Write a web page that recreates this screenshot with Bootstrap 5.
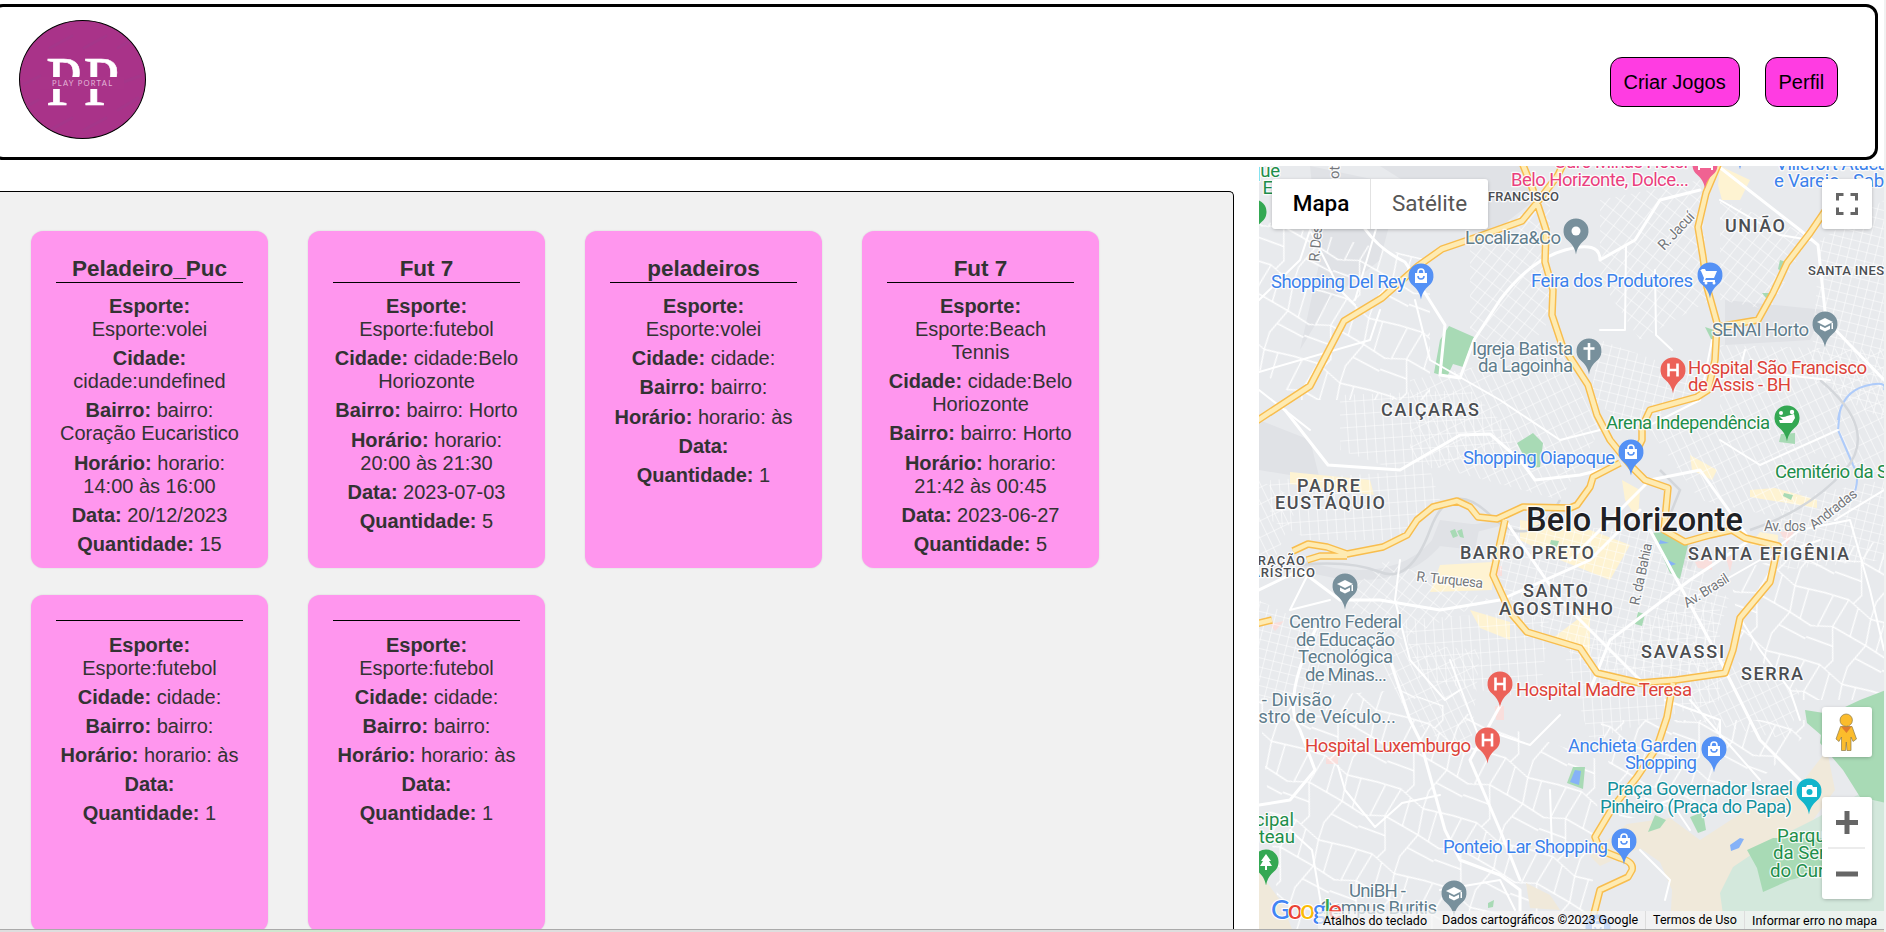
<!DOCTYPE html>
<html lang="pt-BR">
<head>
<meta charset="utf-8">
<meta name="viewport" content="width=device-width, initial-scale=1">
<title>Play Portal</title>
<link href="https://cdn.jsdelivr.net/npm/bootstrap@5.3.0/dist/css/bootstrap.min.css" rel="stylesheet">
<style>
  body { font-family: "Liberation Sans", Arial, sans-serif; font-size: 20px; line-height: 23px; color: #333; background: #fff; }
  .page { height: 932px; border-right: 2px solid #f1f1f1; }
  .topbar { height: 156px; margin: 4px 6px 0 -9px; padding: 0 38px 0 25px; border: 3px solid #000; border-radius: 12px; }
  .logo { width: 127px; height: 119px; margin-bottom: 5px; border: 1px solid #000; border-radius: 50%; background: #a93489; }
  .btn-pp { --bs-btn-font-size: 20px; --bs-btn-line-height: 23px; --bs-btn-color: #000; --bs-btn-bg: #ff3ce2; --bs-btn-border-color: #000;
            --bs-btn-padding-x: 12.9px; --bs-btn-padding-y: 12.5px; --bs-btn-border-radius: 12px; --bs-btn-hover-bg: #f02bd3; }
  .nav-gap { gap: 25px; margin-right: -1px; }
  .content-row { height: 769px; padding-top: 6px; }
  .games { width: 1235px; height: 738px; margin: 25px 0 0 -1px; padding: 39px 0 0 31px; background: #f1f1f1;
           border: 1px solid #000; border-bottom: 0; border-top-right-radius: 5px; }
  .games-grid { display: grid; grid-template-columns: repeat(4, 237px); grid-auto-rows: 337px; gap: 27px 40px; }
  .game { padding: 25px; border: 0; border-radius: 12px; background: #ff96ee; text-align: center; color: #333; box-shadow: 0 0 2px rgba(0,0,0,.12); }
  .game h3 { margin: 0 0 12px; padding-bottom: 1px; border-bottom: 1px solid #000; font-size: 22.5px; font-weight: 700; line-height: 25px; }
  .game h3:empty { margin-bottom: 12.5px; padding: 0; line-height: 0; }
  .game p { margin: 0 0 6.2px; }
  .map { width: 625px; height: 763px; margin-left: 25px; font-family: Roboto, sans-serif; background: #e8eaed; }
  .map-svg { width: 625px; height: 763px; }
  .ctl { position: absolute; background: #fff; border-radius: 3px; box-shadow: 0 1px 4px -1px rgba(0,0,0,.35); }
  .ctl-type { left: 13px; top: 13px; height: 50px; font-size: 22.5px; color: #565656; }
  .ctl-type b { width: 99px; font-weight: 500; color: #000; border-right: 1px solid #e2e2e2; padding-bottom: 2px; }
  .ctl-type span { width: 117px; padding-bottom: 2px; }
  .ctl-sq { right: 12px; width: 50px; height: 50px; }
  .ctl-full { top: 13px; }
  .ctl-man { top: 541px; }
  .ctl-zoom { top: 631px; height: 102px; }
  .terms { position: absolute; right: 0; bottom: 0; height: 18px; font-size: 12.5px; line-height: 18px; color: #000; }
  .terms span { background: rgba(245,245,245,.72); text-align: center; white-space: nowrap; }
  .tm1 { width: 117px; padding: 1px 3px 0 0; } .tm2 { width: 210px; } .tm3 { width: 99px; border-left: 1px solid #ddd; } .tm4 { width: 140px; border-left: 1px solid #ddd; padding-top: 1px; }
  .bottom-edge { height: 3px; border-top: 1px solid #aaa; background: linear-gradient(90deg, #dedede 0 5%, #cfe6cf 12% 18%, #dedede 28% 70%, #e8ddc8 90%); }

  .poi text, .hood text, .street text { paint-order: stroke; stroke: #fff; stroke-width: 2.6px; stroke-linejoin: round; stroke-opacity: .85; }
  .poi { font-size: 18.6px; }
  .hood { font-size: 18px; font-weight: 500; fill: #4b4e52; }
  .hood .sm { font-size: 13px; }
  .street { font-size: 14.5px; fill: #74777b; }
  .c-shop { fill: #3b82ec; } .c-gray { fill: #5f7d8c; } .c-red { fill: #dd4339; } .c-green { fill: #1e8e4a; } .c-pink { fill: #ea3f7e; } .c-teal { fill: #12909c; }
  .rd { fill: none; stroke: #fff; stroke-linejoin: round; stroke-linecap: round; }
  .park { fill: #a8dab5; }
</style>
</head>
<body>
<div class="page overflow-hidden">
  <header class="topbar d-flex align-items-center justify-content-between">
    <a href="#" class="logo d-block overflow-hidden">
      <svg width="125" height="117" viewBox="20 21 125 117" class="d-block">
        <g stroke="#a13a8a" stroke-width="3" stroke-linecap="round" opacity=".55"><path d="M50 48l22-12M84 48l22-12M118 48l20-12M50 130l22-12M84 130l22-12M118 110l20-12M24 84l16-8M24 108l14-8M118 84l22-8"/></g>
        <g font-family="Liberation Serif, serif" font-size="70" fill="#fff">
          <text x="46" y="105" textLength="36" lengthAdjust="spacingAndGlyphs" stroke="#fff" stroke-width=".6">P</text>
          <text x="83.500" y="105" textLength="36" lengthAdjust="spacingAndGlyphs" stroke="#fff" stroke-width=".6">P</text>
        </g>
        <path fill="#a93489" d="M40 77h84v12H40z"/>
        <text x="52" y="85.500" textLength="60" font-family="Lato, sans-serif" font-size="7.500" fill="#e3b4d8">PLAY PORTAL</text>
      </svg>
    </a>
    <nav class="nav-gap d-flex">
      <a href="#" class="btn btn-pp">Criar Jogos</a>
      <a href="#" class="btn btn-pp">Perfil</a>
    </nav>
  </header>

  <main class="content-row d-flex align-items-start">
    <section class="games flex-shrink-0 overflow-hidden">
      <div class="games-grid">
        <article class="game card d-block"><h3>Peladeiro_Puc</h3><p><strong>Esporte:</strong> Esporte:volei</p><p><strong>Cidade:</strong> cidade:undefined</p><p><strong>Bairro:</strong> bairro: Coração Eucaristico</p><p><strong>Horário:</strong> horario: 14:00 às 16:00</p><p><strong>Data:</strong> 20/12/2023</p><p><strong>Quantidade:</strong> 15</p></article>
        <article class="game card d-block"><h3>Fut 7</h3><p><strong>Esporte:</strong> Esporte:futebol</p><p><strong>Cidade:</strong> cidade:Belo Horiozonte</p><p><strong>Bairro:</strong> bairro: Horto</p><p><strong>Horário:</strong> horario: 20:00 às 21:30</p><p><strong>Data:</strong> 2023-07-03</p><p><strong>Quantidade:</strong> 5</p></article>
        <article class="game card d-block"><h3>peladeiros</h3><p><strong>Esporte:</strong> Esporte:volei</p><p><strong>Cidade:</strong> cidade:</p><p><strong>Bairro:</strong> bairro:</p><p><strong>Horário:</strong> horario: às</p><p><strong>Data:</strong></p><p><strong>Quantidade:</strong> 1</p></article>
        <article class="game card d-block"><h3>Fut 7</h3><p><strong>Esporte:</strong> Esporte:Beach Tennis</p><p><strong>Cidade:</strong> cidade:Belo Horiozonte</p><p><strong>Bairro:</strong> bairro: Horto</p><p><strong>Horário:</strong> horario: 21:42 às 00:45</p><p><strong>Data:</strong> 2023-06-27</p><p><strong>Quantidade:</strong> 5</p></article>
        <article class="game card d-block"><h3></h3><p><strong>Esporte:</strong> Esporte:futebol</p><p><strong>Cidade:</strong> cidade:</p><p><strong>Bairro:</strong> bairro:</p><p><strong>Horário:</strong> horario: às</p><p><strong>Data:</strong></p><p><strong>Quantidade:</strong> 1</p></article>
        <article class="game card d-block"><h3></h3><p><strong>Esporte:</strong> Esporte:futebol</p><p><strong>Cidade:</strong> cidade:</p><p><strong>Bairro:</strong> bairro:</p><p><strong>Horário:</strong> horario: às</p><p><strong>Data:</strong></p><p><strong>Quantidade:</strong> 1</p></article>
      </div>
    </section>

    <section class="map position-relative overflow-hidden flex-shrink-0">
      <svg class="map-svg d-block" viewBox="1259 166 625 763">
        <defs>
          <pattern id="gA" width="9" height="13" patternUnits="userSpaceOnUse" patternTransform="rotate(-4)"><path class="rd" stroke-width="1.100" d="M0 0H9M0 0V13"/></pattern>
          <pattern id="gB" width="10" height="12" patternUnits="userSpaceOnUse" patternTransform="rotate(38)"><path class="rd" stroke-width="1.100" d="M0 0H10M0 0V12"/></pattern>
          <pattern id="gC" width="9" height="9" patternUnits="userSpaceOnUse" patternTransform="rotate(14)"><path class="rd" stroke-width="1.100" d="M0 0H9M0 0V9"/></pattern>
          <pattern id="gD" width="8" height="15" patternUnits="userSpaceOnUse" patternTransform="rotate(-26)"><path class="rd" stroke-width="1.100" d="M0 0H8M0 0V15"/></pattern>
          <pattern id="gE" width="83" height="71" patternUnits="userSpaceOnUse" patternTransform="rotate(24)"><path class="rd" stroke-width="1.300" d="M0 12L24 9L52 18L83 12M24 9L20 40L34 71M34 0L30 10M52 18L58 44L83 48M0 48L20 40L58 44M58 44L50 71M50 0L52 18M66 16L70 46M8 11L6 46M36 13L40 42M0 60L28 58M54 60L83 62"/></pattern>
          <g id="p"><path d="M0 23.500C-1 17-4 13-7.500 10A12.500 12.500 0 1 1 7.500 10C4 13 1 17 0 23.500Z"/></g>
          <g id="bag" fill="#fff"><path d="M-6-3H6V7H-6z"/><path d="M-3-3V-4A3 3 0 0 1 3-4V-3" fill="none" stroke="#fff" stroke-width="1.600"/><path d="M-3 0A3 3 0 0 0 3 0" fill="none" stroke="#5491f5" stroke-width="1.500"/></g>
          <g id="hat" fill="#fff"><path d="M-8-2L0-6L8-2L0 2zM-5 1.500L0 4L5 1.500V5L0 7.500L-5 5zM6.500-1H8V5H6.500z"/></g>
          <g id="hh" fill="none" stroke="#fff" stroke-width="2.600"><path d="M-4.500-6.500V6.500M4.500-6.500V6.500M-4.500 0H4.500"/></g>
        </defs>

        <!-- ground -->
        <path fill="#e8eaed" d="M1259 166h625v763h-625z"/>
        <g fill="#e0e2e6"><path d="M1310 166L1400 185L1380 260L1330 300L1300 350L1320 260zM1259 420L1310 440L1320 480L1259 470zM1725 300L1825 310L1810 340L1725 345zM1440 520L1480 525L1475 550L1430 545zM1660 545H1700L1690 570zM1380 166L1520 166L1535 200L1490 235z"/><path d="M1300 560Q1400 590 1440 530L1500 520V526L1445 540Q1400 600 1300 570z"/></g>
        <g fill="#fef3d2"><path d="M1720 166L1750 180L1740 200H1722L1718 185zM1520 520L1590 530L1630 545L1610 580L1560 560L1520 540zM1440 565L1492 562V590L1430 592zM1550 640L1590 610V655zM1750 490L1775 488L1817 500V508L1750 497zM1690 455L1717 470L1712 480L1692 470zM1622 480L1640 490L1638 520L1625 500zM1290 472L1370 480L1374 495L1290 484zM1760 532L1778 535V545H1750zM1470 610L1510 622V640L1480 628z"/></g>
        <g fill="#f9dedc"><path d="M1780 532L1795 530L1787 545zM1695 562L1712 558V570L1698 568zM1726 558L1734 555L1730 572zM1490 566h12v10h-12zM1495 706h9v14h-8zM1326 757l12-2v9h-12zM1270 624l14-3-9 10z"/></g>

        <!-- minor streets -->
        <path fill="url(#gA)" d="M1270 480L1430 470L1440 500L1400 540L1310 540L1270 520zM1400 620L1550 610L1540 700L1420 680zM1560 640L1720 600V700L1590 740zM1340 395L1470 390L1520 440L1410 475L1340 450z"/>
        <path fill="url(#gB)" d="M1470 240L1550 200V320L1520 360L1470 330zM1600 200L1700 180L1710 300L1640 340L1600 280zM1385 560L1490 600L1400 640L1340 600zM1720 200L1810 235L1770 310L1720 300z"/>
        <path fill="url(#gC)" d="M1500 525L1660 530L1730 600L1700 680L1590 670L1500 590zM1600 340L1710 380L1640 430L1590 400zM1820 240L1884 200V420L1810 380zM1780 500L1884 480V560L1780 570zM1259 600L1340 640L1330 690L1259 700z"/>
        <path fill="url(#gD)" d="M1410 380L1560 350L1600 430L1560 500L1410 460zM1370 640L1480 650L1470 760L1410 720zM1650 430L1830 410L1790 520L1700 500zM1690 640L1800 690L1790 740L1690 720zM1259 480L1300 500L1270 570H1259zM1720 345L1884 350V480L1780 440L1720 420z"/>
        <path fill="url(#gE)" d="M1259 220L1430 260L1430 400L1300 400L1259 370zM1259 700L1400 690L1600 760L1590 929H1280zM1730 570L1884 540V700L1800 700L1740 640zM1600 720L1820 720L1740 800L1620 820z"/>

        <!-- terrain and parks -->
        <path fill="#f0e9da" d="M1827 750L1835 790L1813 820L1884 800V929H1670L1672 890L1660 862L1640 848L1600 866L1590 856L1612 836L1627 824L1670 818L1700 840L1740 814L1800 785zM1259 872L1280 900L1292 929H1259zM1526 883L1550 895L1560 910L1530 908z"/>
        <path fill="#d3e8dc" d="M1725 929L1720 893L1733 867L1773 840L1813 820L1884 780V929z"/>
        <g class="park"><path d="M1805 710L1830 714L1860 700L1886 690V803L1860 797L1843 770L1820 743L1821 735L1807 723zM1747 850L1773 838L1822 838V872L1790 880L1763 892L1757 868z"/>
          <path d="M1449 326L1474 337L1463 367L1453 364L1447 377L1434 373L1440 340zM1652 533L1663 532L1688 545L1680 579L1670 573zM1517 443L1533 433L1543 443L1540 467L1530 468zM1567 783L1573 767L1585 767L1583 789zM1648 832L1655 815L1666 820L1660 828zM1690 817L1703 812L1706 830L1698 833zM1781 434L1795 433V444L1779 442zM1784 493L1793 495L1791 500L1783 496zM1450 531l5-2 3 7-5 2zM1457 531l5-2 2 9-4-1zM1638 612l7 2-3 12-7-2zM1705 327l12 4-4 12zM1780 260l6 2-3 10-5-3zM1762 293h10l-6 5zM1551 540l8 1-2 6-7-3zM1488 903l6-3-1 7-5 1z"/></g>
        <path fill="#86b2f7" d="M1570 782l5-12 6 1-2 14zM1730 845l10-7 4 1-5 9-8 3zM1660 540l9 3-10 1zM1668 560l8 4-6 2z"/>
        <path fill="none" stroke="#aecbfa" stroke-width="2" d="M1840 410L1838 430L1853 465Q1862 480 1851 500M1838 420Q1842 392 1865 386T1884 390"/>
        <g fill="none" stroke="#d4d7db" stroke-width="2.500"><path d="M1300 565Q1350 560 1380 572T1430 530T1490 515T1560 500M1660 470L1680 490L1668 520M1750 530Q1810 510 1845 470T1820 380"/></g>

        <!-- white main roads -->
        <g class="rd" stroke-width="3"><path d="M1365 229Q1380 250 1405 262L1420 285L1445 325L1440 375L1460 378L1474 340L1500 300Q1530 260 1565 250T1600 260L1635 240L1660 200L1700 190"/><path d="M1718 166L1800 230L1818 245L1826 320L1850 345L1884 380"/><path d="M1285 410L1328 465L1400 470L1460 435L1490 434L1520 460L1535 480L1580 475L1620 465"/><path d="M1259 590L1300 570L1340 600L1380 600L1440 610L1500 600L1590 560L1640 510"/><path d="M1505 520L1560 600L1640 680"/><path d="M1650 530L1720 660L1760 740L1800 780"/><path d="M1570 560L1650 480L1700 470L1750 540L1690 580L1610 640L1590 690"/><path d="M1390 660L1410 720L1420 740L1445 830L1460 860L1500 875L1520 890V929"/><path d="M1320 620Q1280 700 1300 730L1315 770L1290 800L1259 805"/><path d="M1500 706L1470 760L1500 830L1520 880"/></g>
        <g class="rd" stroke-width="2"><path d="M1259 300L1300 260L1310 230L1340 290L1355 305M1380 310L1370 340L1259 372M1376 229L1355 300M1259 390L1310 430M1415 300L1430 360L1500 400L1560 440L1600 430M1600 330L1625 330L1626 245M1655 270L1656 335L1672 350M1720 200L1780 235L1810 240M1640 430L1700 400L1712 340M1720 440L1760 465L1838 430M1745 350L1740 370L1830 380M1835 520L1884 490M1778 547L1800 530L1850 520L1870 590L1884 650M1690 600L1760 560L1820 540M1740 618L1760 650L1790 690L1800 720M1400 560L1395 600L1410 660L1445 700L1460 690M1310 570L1290 610L1330 600M1450 660L1480 740M1338 766L1345 790L1375 827L1402 803L1440 795M1290 830L1312 850L1322 910M1440 890L1500 880L1515 910M1500 735L1530 745L1560 715M1640 850L1670 880L1665 900M1690 830L1670 800L1640 810M1550 790L1552 850M1665 700L1720 720L1720 760M1690 700L1760 780"/></g>

        <!-- highways -->
        <path id="h1" fill="none" d="M1255 422L1310 386L1344 321L1382 298L1418 266L1442 249L1480 236L1522 221L1540 199L1558 175L1565 160M1521 160L1533 190L1546 230L1545 262L1553 290L1552 315L1562 345L1588 385L1597 415L1610 440L1631 466L1645 480L1668 488L1664 530L1685 542L1710 535L1732 530L1745 538L1778 546L1770 582L1740 618L1733 650L1725 673L1676 680L1640 683L1597 673L1580 648L1527 632L1510 612L1493 575L1505 520M1293 551L1308 544L1327 547L1347 554L1383 547L1407 535L1417 520L1433 507L1457 501L1470 507L1478 517L1497 519L1523 507L1570 508L1577 505L1590 487L1593 477L1620 463M1307 560L1320 556L1347 556M1255 624L1272 620M1720 160L1706 193L1698 227L1703 257L1707 287L1717 323L1715 360L1708 390L1697 397L1650 410L1642 427L1642 440L1632 460M1717 327L1758 320L1773 293L1787 263L1810 233L1825 211M1673 683L1667 717L1657 747L1637 777L1613 807L1595 837L1600 850L1620 858Q1634 862 1632 870L1628 877L1600 890L1590 929"/>
        <use href="#h1" stroke="#f8bd4d" stroke-width="7.500" stroke-linejoin="round"/>
        <use href="#h1" stroke="#feebb2" stroke-width="4.600" stroke-linejoin="round"/>

        <!-- pins -->
        <g fill="#78909c"><use href="#p" x="1576" y="231"/><use href="#p" x="1589" y="351"/><use href="#p" x="1825" y="324"/><use href="#p" x="1345" y="586"/><use href="#p" x="1454" y="893"/></g>
        <g fill="#5491f5"><use href="#p" x="1421" y="276"/><use href="#p" x="1710" y="275"/><use href="#p" x="1631" y="452"/><use href="#p" x="1714" y="749"/><use href="#p" x="1624" y="841"/><use href="#p" x="1598" y="927"/><use href="#p" x="1740" y="146"/></g>
        <g fill="#ec6259"><use href="#p" x="1673" y="370"/><use href="#p" x="1500" y="684"/><use href="#p" x="1487.500" y="740"/></g>
        <g fill="#34a853"><use href="#p" x="1787" y="418"/><use href="#p" x="1266" y="862"/><use href="#p" x="1254" y="212"/></g>
        <use href="#p" x="1705" y="165" fill="#f06292"/><use href="#p" x="1809" y="791" fill="#12b5cb"/>
        <circle cx="1576" cy="231" r="4.500" fill="#fff"/>
        <path d="M1589 343v17M1583.500 348.500h11" stroke="#fff" stroke-width="2.600"/>
        <use href="#hat" x="1825" y="324"/><use href="#hat" x="1345" y="586"/><use href="#hat" x="1454" y="893"/>
        <use href="#bag" x="1421" y="276"/><use href="#bag" x="1631" y="452"/><use href="#bag" x="1714" y="749"/><use href="#bag" x="1624" y="841"/><use href="#bag" x="1598" y="927"/>
        <use href="#hh" x="1673" y="370"/><use href="#hh" x="1500" y="684"/><use href="#hh" x="1487.500" y="740"/>
        <path fill="#fff" d="M1702 269h3l1 2h11l-3 7h-8l-1 2h10v2h-12l1-4-3-7h-1zM1698 166h15v4h-2v-2h-11v2h-2z"/><circle cx="1706" cy="283" r="1.500" fill="#fff"/><circle cx="1714" cy="283" r="1.500" fill="#fff"/>
        <g fill="#fff"><circle cx="1781" cy="413" r="2"/><circle cx="1792" cy="412" r="2.200"/><path d="M1779 416q4 2 8 0l7-2 1 4-3 5h-12l-1-3h4z"/></g>
        <path fill="#fff" d="M1266 854l5 7h-2l3 5h-5v4h-2v-4h-5l3-5h-2zM1802 787h4l1-2h5l1 2h4v10h-15z"/><circle cx="1809.500" cy="792" r="3" fill="#12b5cb"/>

        <!-- labels -->
        <g class="poi">
          <g class="c-green"><text x="1250" y="177" textLength="30">que</text><text x="1248" y="194" textLength="25">a E</text><text x="1606" y="429" textLength="164">Arena Independência</text><text x="1775" y="478" textLength="113">Cemitério da S</text><text x="1777" y="842">Parque</text><text x="1773" y="859">da Serra</text><text x="1770" y="877">do Curral</text><text x="1294" y="826" text-anchor="end">Municipal</text><text x="1295" y="843" text-anchor="end">Cousteau</text></g>
          <g class="c-pink"><text x="1554" y="168" textLength="134">Ouro Minas Hotel</text><text x="1511" y="186" textLength="178">Belo Horizonte, Dolce...</text></g>
          <g class="c-shop"><text x="1271" y="288" textLength="135">Shopping Del Rey</text><text x="1531" y="287" textLength="162">Feira dos Produtores</text><text x="1776" y="170" textLength="122">Villefort Atacad</text><text x="1774" y="187" textLength="120">e Varejo - Saba</text><text x="1463" y="464" textLength="152">Shopping Oiapoque</text><text x="1568" y="752" textLength="129">Anchieta Garden</text><text x="1625" y="769" textLength="72">Shopping</text><text x="1443" y="853" textLength="165">Ponteio Lar Shopping</text></g>
          <g class="c-gray"><text x="1465" y="244" textLength="96">Localiza&amp;Co</text><text x="1472" y="355" textLength="101">Igreja Batista</text><text x="1478" y="372" textLength="95">da Lagoinha</text><text x="1712" y="336" textLength="97">SENAI Horto</text><text x="1289" y="628" textLength="113">Centro Federal</text><text x="1296" y="646" textLength="99">de Educação</text><text x="1298" y="663" textLength="95">Tecnológica</text><text x="1305" y="681" textLength="82">de Minas...</text><text x="1332" y="706" text-anchor="end">Detran - Divisão</text><text x="1396" y="723" text-anchor="end">Registro de Veículo...</text><text x="1349" y="897" textLength="57">UniBH -</text><text x="1320" y="914" textLength="117">Campus Buritis</text></g>
          <g class="c-red"><text x="1688" y="374" textLength="179">Hospital São Francisco</text><text x="1688" y="391" textLength="103">de Assis - BH</text><text x="1516" y="696" textLength="176">Hospital Madre Teresa</text><text x="1305" y="752" textLength="166">Hospital Luxemburgo</text></g>
          <g class="c-teal"><text x="1607" y="795" textLength="186">Praça Governador Israel</text><text x="1600" y="813" textLength="192">Pinheiro (Praça do Papa)</text></g>
        </g>
        <g class="street">
          <text transform="translate(1319 262) rotate(-85)" textLength="36">R. Des</text><text transform="translate(1339 179) rotate(-88)">ota</text>
          <text transform="translate(1664 251) rotate(-47)" textLength="46">R. Jacuí</text><text x="1764" y="531" textLength="42" font-size="14">Av. dos</text><text transform="translate(1814 530) rotate(-38)" textLength="56" font-size="14">Andradas</text>
          <text transform="translate(1416 581) rotate(6)" textLength="67" font-size="14">R. Turquesa</text><text transform="translate(1639 606) rotate(-78)" textLength="63" font-size="14">R. da Bahia</text><text transform="translate(1687 608) rotate(-32)" textLength="51" font-size="14">Av. Brasil</text>
        </g>
        <g class="hood">
          <text class="sm" x="1488" y="201" textLength="71">FRANCISCO</text><text class="sm" x="1808" y="275" textLength="76">SANTA INES</text><text class="sm" x="1238" y="565" textLength="67">CORAÇÃO</text><text class="sm" x="1224" y="576.500" textLength="91">EUCARÍSTICO</text>
          <text x="1381" y="416" textLength="98">CAIÇARAS</text><text x="1725" y="232" textLength="60">UNIÃO</text><text x="1297" y="492" textLength="63">PADRE</text><text x="1275" y="509" textLength="110">EUSTÁQUIO</text><text x="1460" y="559" textLength="134">BARRO PRETO</text><text x="1688" y="560" textLength="161">SANTA EFIGÊNIA</text><text x="1523" y="597" textLength="65">SANTO</text><text x="1499" y="615" textLength="114">AGOSTINHO</text><text x="1641" y="658" textLength="83">SAVASSI</text><text x="1741" y="680" textLength="62">SERRA</text>
          <text x="1526" y="531" textLength="217" font-size="32.500" fill="#202124">Belo Horizonte</text>
        </g>
        <text x="1271" y="919" textLength="71" font-family="Lato, sans-serif" font-size="26" font-weight="500" stroke="#fff" stroke-width="2" paint-order="stroke"><tspan fill="#4285f4">G</tspan><tspan fill="#ea4335">o</tspan><tspan fill="#fbbc04">o</tspan><tspan fill="#4285f4">g</tspan><tspan fill="#34a853">l</tspan><tspan fill="#ea4335">e</tspan></text>
      </svg>

      <div class="ctl ctl-type d-flex text-center align-items-stretch"><b class="d-flex align-items-center justify-content-center">Mapa</b><span class="d-flex align-items-center justify-content-center">Satélite</span></div>
      <div class="ctl ctl-sq ctl-full"><svg class="d-block" width="50" height="50" fill="none" stroke="#666" stroke-width="3"><path d="M15.500 21.500V15.500H21.500M28.500 15.500H34.500V21.500M34.500 28.500V34.500H28.500M21.500 34.500H15.500V28.500"/></svg></div>
      <div class="ctl ctl-sq ctl-man"><svg class="d-block" width="50" height="50" stroke="#8b7a4c" stroke-width=".7"><path fill="#fbbc2c" d="M18.500 19.500H30L34.500 32L31 34.500L29 30V43.500H25L24.300 35L23.600 43.500H19.500V30L17 34.500L14 32z"/><path fill="#e07b2c" stroke="none" d="M19 19.500H29.500L24.500 26z"/><circle cx="24.200" cy="13.200" r="6.200" fill="#fbbc2c"/></svg></div>
      <div class="ctl ctl-sq ctl-zoom"><svg class="d-block" width="50" height="102" fill="none" stroke="#666" stroke-width="5"><path d="M14 25.500H36M25 14V37M14 77H36"/><path d="M6 51H43" stroke="#e6e6e6" stroke-width="1.500"/></svg></div>
      <div class="terms d-flex"><span class="tm1">Atalhos do teclado</span><span class="tm2">Dados cartográficos ©2023 Google</span><span class="tm3">Termos de Uso</span><span class="tm4">Informar erro no mapa</span></div>
    </section>
  </main>
  <div class="bottom-edge"></div>
</div>
<script src="https://cdn.jsdelivr.net/npm/bootstrap@5.3.0/dist/js/bootstrap.bundle.min.js"></script>
</body>
</html>
